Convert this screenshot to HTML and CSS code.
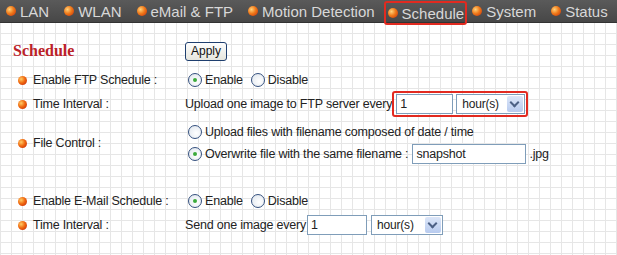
FILE: index.html
```html
<!DOCTYPE html>
<html lang="en">
<head>
  <meta charset="UTF-8" />
  <title>Schedule</title>
  <link rel="stylesheet" href="styles.css">
</head>
<body>
  <div class="nav">
    <span class="nav-item"><i class="ball"></i>LAN</span>
    <span class="nav-item"><i class="ball"></i>WLAN</span>
    <span class="nav-item"><i class="ball"></i>eMail &amp; FTP</span>
    <span class="nav-item"><i class="ball"></i>Motion Detection</span>
    <span class="nav-item active"><i class="ball"></i>Schedule</span>
    <span class="nav-item"><i class="ball"></i>System</span>
    <span class="nav-item"><i class="ball"></i>Status</span>
  </div>

  <div class="page">
    <div class="row head">
      <div class="label title">Schedule</div>
      <div class="field"><button class="btn">Apply</button></div>
    </div>

    <div class="row first">
      <div class="label"><i class="dot"></i>Enable FTP Schedule :</div>
      <div class="field">
        <span class="radio on"></span>Enable
        <span class="radio second"></span>Disable
      </div>
    </div>

    <div class="row">
      <div class="label"><i class="dot"></i>Time Interval :</div>
      <div class="field">
        Upload one image to FTP server every
        <span class="mark">
          <span class="input w57">1</span>
          <span class="select w69">hour(s)<b class="arrow"></b></span>
        </span>
      </div>
    </div>

    <div class="row tall">
      <div class="label"><i class="dot"></i>File Control :</div>
      <div class="field stack">
        <div class="sub"><span class="radio"></span>Upload files with filename composed of date / time</div>
        <div class="sub"><span class="radio on"></span>Overwrite file with the same filename :
          <span class="input w113">snapshot</span>.jpg</div>
      </div>
    </div>

    <div class="row spaced">
      <div class="label"><i class="dot"></i>Enable E-Mail Schedule :</div>
      <div class="field">
        <span class="radio on"></span>Enable
        <span class="radio second"></span>Disable
      </div>
    </div>

    <div class="row">
      <div class="label"><i class="dot"></i>Time Interval :</div>
      <div class="field">
        Send one image every
        <span class="input w60">1</span>
        <span class="select w72">hour(s)<b class="arrow"></b></span>
      </div>
    </div>
  </div>
</body>
</html>
```

FILE: styles.css
```css
body {
  margin: 0;
  font-family: "Liberation Sans", Arial, sans-serif;
  font-size: 12.5px;
  letter-spacing: -0.2px;
  color: #222;
  background-color: #fff;
  background-image:
    linear-gradient(to right, #e6e6e6 1px, transparent 1px),
    linear-gradient(to bottom, #e6e6e6 1px, transparent 1px);
  background-size: 11px 11px;
  width: 617px;
  height: 255px;
  overflow: hidden;
}

.nav {
  height: 22px;
  background: linear-gradient(#5a5a5a, #474747);
  border-bottom: 1px solid #333;
  display: flex;
  align-items: center;
  padding-left: 6px;
  gap: 15px;
  font-size: 15px;
  letter-spacing: 0;
  color: #d8d8d8;
  white-space: nowrap;
}

.nav-item {
  display: flex;
  align-items: center;
  gap: 4px;
  height: 22px;
  box-sizing: border-box;
}

.nav-item.active {
  align-self: flex-start;
  border: 2px solid #e22a20;
  border-radius: 3px;
  height: 24px;
  margin-top: 1px;
  padding: 0 1px 0 2px;
  margin-left: -6px;
  margin-right: -10px;
}

.ball {
  width: 10px;
  height: 10px;
  border-radius: 50%;
  background: radial-gradient(circle at 35% 35%, #ffd27a 0, #f07a1a 45%, #c22a08 100%);
  display: inline-block;
}

.page {
  padding-top: 17px;
}

.row {
  display: flex;
  align-items: center;
  height: 24px;
}

.row.head {
  height: 22px;
}

.row.first {
  margin-top: 6px;
}

.row.tall {
  height: 44px;
  margin-top: 5px;
}

.row.spaced {
  margin-top: 24px;
}

.label {
  width: 185px;
  padding-left: 18px;
  box-sizing: border-box;
  display: flex;
  align-items: center;
  white-space: nowrap;
}

.label.title {
  padding-left: 13px;
  font-family: "Liberation Serif", "Times New Roman", serif;
  font-weight: bold;
  font-size: 16px;
  letter-spacing: 0;
  color: #bb2228;
}

.dot {
  width: 9px;
  height: 9px;
  border-radius: 50%;
  background: radial-gradient(circle at 35% 35%, #ffcc66 0, #f06a10 45%, #c01e08 100%);
  margin-right: 6px;
  display: inline-block;
}

.field {
  display: flex;
  align-items: center;
  white-space: nowrap;
}

.field.stack {
  flex-direction: column;
  align-items: flex-start;
}

.sub {
  display: flex;
  align-items: center;
  height: 22px;
}

.btn {
  font-family: "Liberation Sans", Arial, sans-serif;
  font-size: 12px;
  padding: 1px 5px;
  height: 19px;
  border: 1px solid #1f3f6f;
  border-radius: 3px;
  background: linear-gradient(#fdfdfd, #e6e6de);
  color: #111;
}

.radio {
  width: 12px;
  height: 12px;
  border: 1px solid #34507e;
  border-radius: 50%;
  background: radial-gradient(circle at 60% 60%, #fff 0, #dde4ec 100%);
  margin: 0 3px;
  position: relative;
  display: inline-block;
}

.radio.second {
  margin-left: 8px;
}

.radio.on::after {
  content: "";
  position: absolute;
  left: 4px;
  top: 4px;
  width: 4px;
  height: 4px;
  border-radius: 50%;
  background: #3caa3c;
}

.mark {
  display: flex;
  align-items: center;
  gap: 2px;
  border: 2px solid #e22a20;
  border-radius: 3px;
  padding: 1px 1px 1px 2px;
}

.input {
  display: inline-block;
  height: 20px;
  line-height: 18px;
  box-sizing: border-box;
  border: 1px solid #7f9db9;
  background: #fff;
  padding-left: 3px;
  margin-left: 1px;
}

.mark .input {
  margin-left: 0;
}

.w57 { width: 57px; }
.w60 { width: 60px; }
.w113 { width: 114px; margin-left: 4px; margin-right: 3px; }

.select {
  display: inline-flex;
  align-items: center;
  justify-content: space-between;
  height: 20px;
  box-sizing: border-box;
  border: 1px solid #7f9db9;
  background: #fff;
  padding-left: 5px;
  padding-right: 1px;
  margin-left: 4px;
  font-size: 12px;
}

.mark .select {
  margin-left: 1px;
}

.w69 { width: 69px; }
.w72 { width: 72px; }

.arrow {
  width: 16px;
  height: 16px;
  background: linear-gradient(#dce6f8, #b8cbef);
  border-radius: 2px;
  position: relative;
}

.arrow::after {
  content: "";
  position: absolute;
  left: 4px;
  top: 3px;
  width: 5px;
  height: 5px;
  border-right: 2px solid #4d6185;
  border-bottom: 2px solid #4d6185;
  transform: rotate(45deg);
}
```
